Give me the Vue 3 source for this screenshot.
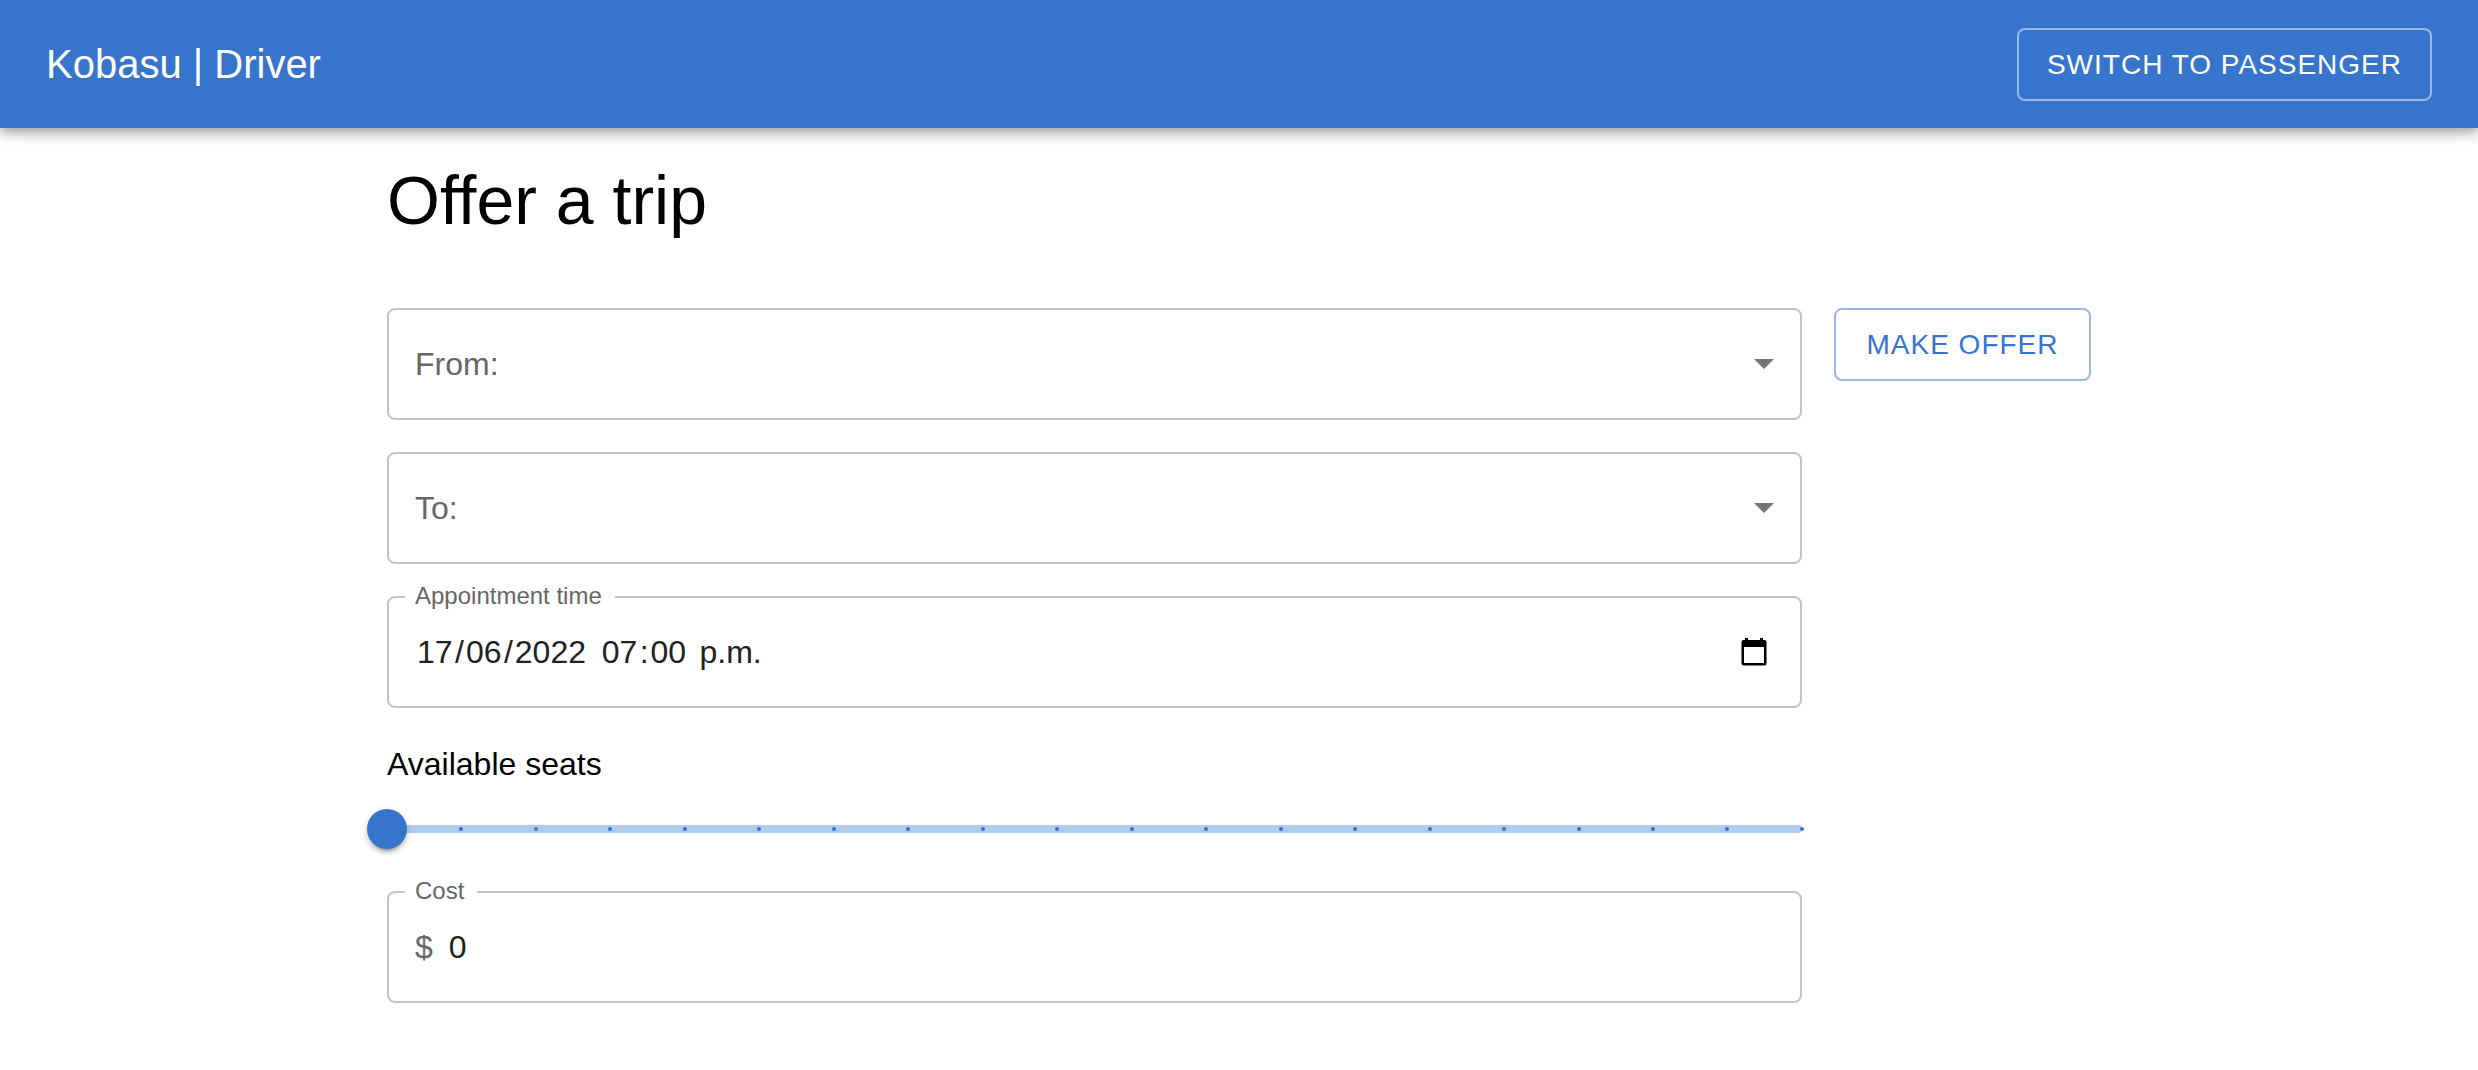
<script setup>
import { ref } from 'vue'

const origin = ref('')
const destination = ref('')
const seats = ref(1)
const maxSeats = 20
const cost = ref(0)

const when = ref([
  { name: 'Day', value: '17', size: 'two', after: '/' },
  { name: 'Month', value: '06', size: 'two', after: '/' },
  { name: 'Year', value: '2022', size: 'four', after: ' ' },
  { name: 'Hour', value: '07', size: 'two', after: ':' },
  { name: 'Minute', value: '00', size: 'two', after: ' ' },
  { name: 'AM or PM', value: 'p.m.', size: 'period', after: '' }
])
</script>

<template>
  <div class="page">
    <header class="bar">
      <span class="brand">Kobasu | Driver</span>
      <button type="button" class="btn btn-light">SWITCH TO PASSENGER</button>
    </header>

    <main class="content">
      <h1>Offer a trip</h1>
      <form class="offer" @submit.prevent>
        <div class="fields">
          <div class="field">
            <select id="from" v-model="origin">
              <option value=""></option>
            </select>
            <label for="from" class="placeholder">From:</label>
            <svg class="arrow" viewBox="0 0 20 10" aria-hidden="true"><path d="M0 0h20L10 10z" /></svg>
          </div>

          <div class="field">
            <select id="to" v-model="destination">
              <option value=""></option>
            </select>
            <label for="to" class="placeholder">To:</label>
            <svg class="arrow" viewBox="0 0 20 10" aria-hidden="true"><path d="M0 0h20L10 10z" /></svg>
          </div>

          <div class="field" role="group" aria-labelledby="when-label">
            <label id="when-label" for="when-0" class="notch">Appointment time</label>
            <div class="when">
              <template v-for="(part, i) in when" :key="part.name">
                <input :id="'when-' + i" v-model="part.value" type="text" :class="part.size" :aria-label="part.name" />
                <span v-if="part.after" class="sep">{{ part.after }}</span>
              </template>
            </div>
            <button type="button" class="picker" aria-label="Show date picker">
              <svg viewBox="0 0 26 28" aria-hidden="true">
                <path fill-rule="evenodd" d="M4 0h3v2h12V0h3v2h1.500a2 2 0 0 1 2 2v21.500a2 2 0 0 1-2 2h-21a2 2 0 0 1-2-2V4a2 2 0 0 1 2-2H4zM3 9v16h20V9z" />
              </svg>
            </button>
          </div>

          <div class="seats">
            <label for="seats">Available seats</label>
            <div class="slider">
              <div class="track">
                <i v-for="n in maxSeats" :key="n"></i>
              </div>
              <input id="seats" v-model="seats" type="range" min="1" :max="maxSeats" />
            </div>
          </div>

          <div class="field">
            <label for="cost" class="notch">Cost</label>
            <span class="currency">$</span>
            <input id="cost" v-model="cost" type="number" class="amount" min="0" />
          </div>
        </div>

        <button type="submit" class="btn btn-primary">MAKE OFFER</button>
      </form>
    </main>
  </div>
</template>

<style>
body {
  margin: 0;
  background: #fff;
}
</style>

<style scoped>
.page,
.page button,
.page input,
.page select {
  font-family: "Liberation Sans", Arial, sans-serif;
}

.page {
  font-size: 32px;
  line-height: 48px;
  color: #000;
}

.page *,
.page *::before {
  box-sizing: border-box;
}

.bar {
  display: flex;
  align-items: center;
  justify-content: space-between;
  height: 128px;
  padding: 0 46px;
  background: #3774cc;
  color: #fff;
  box-shadow:
    0 4px 8px -2px rgba(0, 0, 0, 0.2),
    0 8px 10px rgba(0, 0, 0, 0.14),
    0 2px 20px rgba(0, 0, 0, 0.12);
}

.brand {
  font-size: 40px;
}

.btn {
  min-width: 257px;
  padding: 10px 28px;
  border: 2px solid;
  border-radius: 8px;
  background: transparent;
  font-size: 28px;
  line-height: 49px;
  letter-spacing: 1px;
  white-space: nowrap;
  cursor: pointer;
}

.btn-light {
  color: #fff;
  border-color: #9bb9e5;
}

.btn-primary {
  color: #3774cc;
  border-color: #9bb9e5;
}

.content {
  max-width: 1704px;
  margin: 0 auto;
  padding: 32px 0;
}

h1 {
  margin: 0 0 68px;
  font-size: 68px;
  font-weight: 400;
  line-height: 80px;
}

.offer {
  display: flex;
  align-items: flex-start;
  gap: 32px;
}

.fields {
  flex: 1;
  min-width: 0;
  display: flex;
  flex-direction: column;
  gap: 32px;
}

.field {
  position: relative;
  display: flex;
  align-items: center;
  height: 112px;
  padding: 0 26px;
  border: 2px solid #c4c4c4;
  border-radius: 8px;
}

.field select {
  position: absolute;
  inset: 0;
  width: 100%;
  border: 0;
  background: transparent;
  appearance: none;
  font-size: 32px;
}

.placeholder {
  color: #666;
  pointer-events: none;
}

.arrow {
  width: 20px;
  height: 10px;
  margin-left: auto;
  fill: #757575;
  pointer-events: none;
}

.notch {
  position: absolute;
  top: -15px;
  left: 16px;
  padding: 0 13px 0 10px;
  background: #fff;
  color: #666;
  font-size: 24px;
  line-height: 26px;
}

.field input {
  height: 48px;
  margin: 0;
  padding: 0;
  border: 0;
  background: transparent;
  color: #212121;
  font-size: 32px;
}

.when {
  display: flex;
  flex: 1;
  color: #212121;
}

.field .when input {
  padding: 0 2px;
}

.when .two {
  width: 40px;
}

.when .four {
  width: 78px;
}

.when .period {
  width: 68px;
}

.sep {
  white-space: pre;
}

.picker {
  display: flex;
  padding: 0 7px;
  border: 0;
  background: transparent;
  cursor: pointer;
}

.picker svg {
  width: 26px;
  height: 28px;
}

.seats {
  display: flex;
  flex-direction: column;
  gap: 11px;
}

.slider {
  position: relative;
  padding: 26px 0;
}

.track {
  display: flex;
  align-items: center;
  justify-content: space-between;
  height: 8px;
  border-radius: 4px;
  background: #b2caec;
}

.track i {
  width: 4px;
  height: 4px;
  margin: 0 -2px;
  border-radius: 2px;
  background: #3774cc;
}

.slider input {
  position: absolute;
  inset: 0 -20px;
  width: calc(100% + 40px);
  height: 60px;
  margin: 0;
  background: transparent;
  appearance: none;
  cursor: pointer;
}

.slider input::-webkit-slider-thumb {
  width: 40px;
  height: 40px;
  border-radius: 50%;
  background: #3774cc;
  appearance: none;
  box-shadow:
    0 6px 2px -4px rgba(0, 0, 0, 0.2),
    0 4px 4px rgba(0, 0, 0, 0.14),
    0 2px 10px rgba(0, 0, 0, 0.12);
}

.currency {
  margin-right: 16px;
  color: #666;
}

.field .amount {
  flex: 1;
  appearance: textfield;
}

.amount::-webkit-inner-spin-button {
  appearance: none;
}
</style>
